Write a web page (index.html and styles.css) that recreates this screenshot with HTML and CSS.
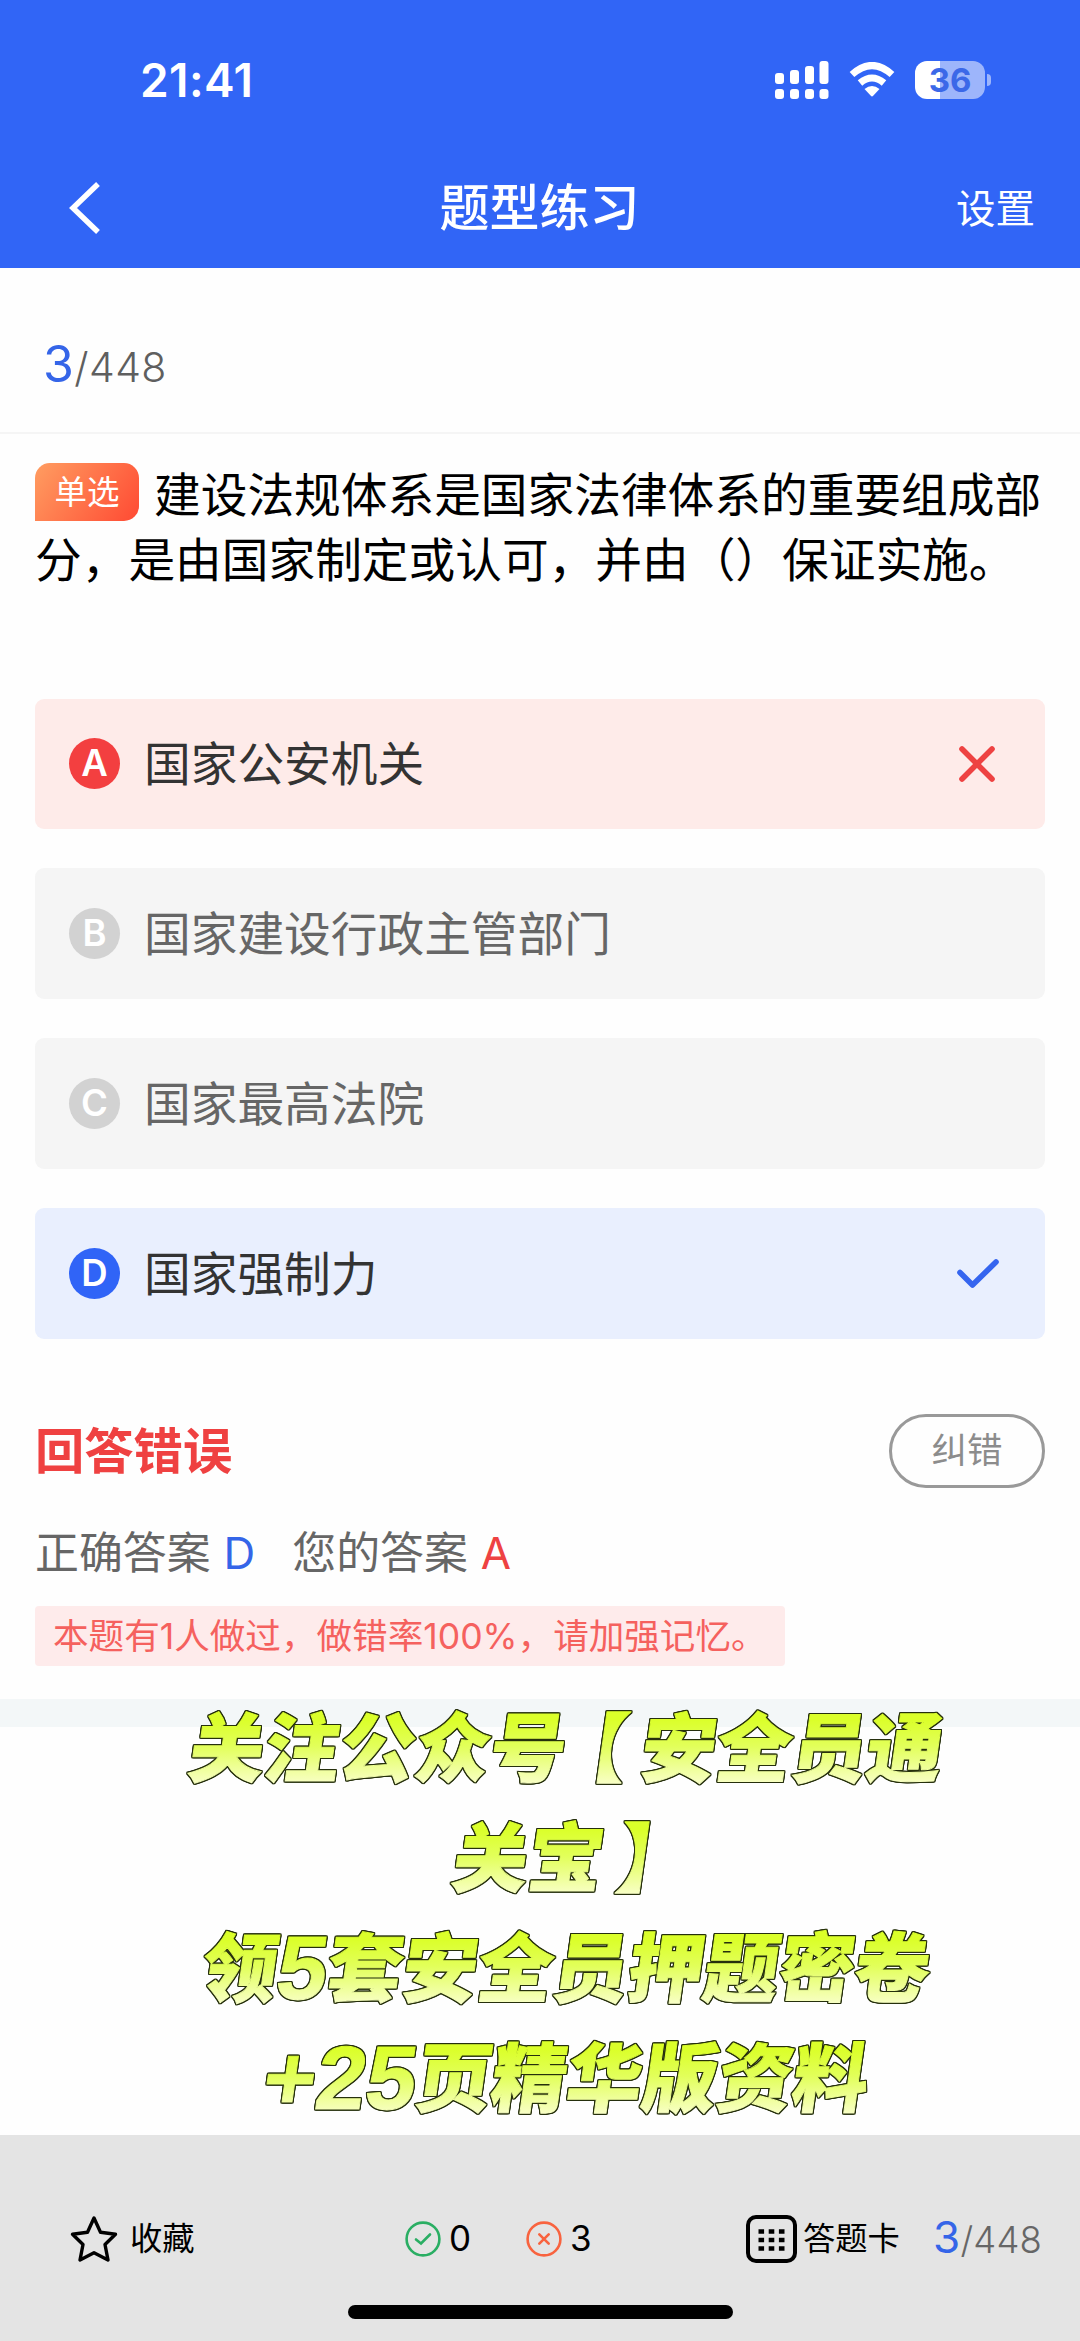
FILE: index.html
```html
<!DOCTYPE html>
<html lang="zh-CN">
<head>
<meta charset="utf-8">
<title>题型练习</title>
<link rel="stylesheet" href="styles.css">
</head>
<body>
<div class="screen">
  <header class="header">
    <div class="status">
      <span class="time">21:41</span>
      <div class="status-icons">
        <svg class="signal" width="54" height="38" viewBox="0 0 54 38" fill="#fff">
          <rect x="0" y="12" width="9" height="11" rx="3"/><rect x="15" y="9" width="9" height="14" rx="3"/><rect x="30" y="5" width="9" height="18" rx="3"/><rect x="44.500" y="0" width="9" height="23" rx="3"/>
          <rect x="0" y="28" width="9" height="10" rx="3"/><rect x="15" y="28" width="9" height="10" rx="3"/><rect x="30" y="28" width="9" height="10" rx="3"/><rect x="44.500" y="28" width="9" height="10" rx="3"/>
        </svg>
        <svg class="wifi" width="46" height="36" viewBox="0 0 46 36">
          <path d="M3 12.500Q23-5.500 43 12.500M11 21Q23 11 35 21" fill="none" stroke="#fff" stroke-width="7"/>
          <path d="M15.500 27Q23 21 30.500 27L24.200 33.800Q23 35 21.800 33.800Z" fill="#fff"/>
        </svg>
        <div class="battery"><span>36</span></div>
        <i class="battery-tip"></i>
      </div>
    </div>
    <nav class="nav">
      <svg class="back" width="34" height="54" viewBox="0 0 34 54"><path d="M30 3L5 27L30 51" fill="none" stroke="#fff" stroke-width="5.500"/></svg>
      <h1 class="title">题型练习</h1>
      <span class="settings">设置</span>
    </nav>
  </header>

  <div class="progress"><b>3</b><span>/448</span></div>

  <main class="content">
    <p class="question"><span class="tag">单选</span>建设法规体系是国家法律体系的重要组成部分，是由国家制定或认可，并由（）保证实施。</p>

    <div class="options">
      <div class="option wrong">
        <span class="letter">A</span><span class="label">国家公安机关</span>
        <svg class="mark cross" width="36" height="36" viewBox="0 0 36 36"><path d="M3 3L33 33M33 3L3 33" fill="none" stroke="#ee4242" stroke-width="5.600" stroke-linecap="round"/></svg>
      </div>
      <div class="option"><span class="letter">B</span><span class="label">国家建设行政主管部门</span></div>
      <div class="option"><span class="letter">C</span><span class="label">国家最高法院</span></div>
      <div class="option right">
        <span class="letter">D</span><span class="label">国家强制力</span>
        <svg class="mark check" width="42" height="30" viewBox="0 0 42 30"><path d="M3 13.500L15.500 26L39 3" fill="none" stroke="#3565ef" stroke-width="5.600" stroke-linecap="round" stroke-linejoin="round"/></svg>
      </div>
    </div>

    <section class="result">
      <div class="result-head"><h2>回答错误</h2><span class="report">纠错</span></div>
      <div class="answers"><span>正确答案</span><b class="blue">D</b><span class="yours">您的答案</span><b class="red">A</b></div>
      <div class="hint">本题有1人做过，做错率100%，请加强记忆。</div>
    </section>
  </main>

  <div class="explain">
    <div class="promo">
      <div>关注公众号<span class="open">【</span>安全员通</div>
      <div>关宝<span class="close">】</span></div>
      <div>领<span class="digit">5</span>套安全员押题密卷</div>
      <div><span class="digit">+25</span>页精华版资料</div>
    </div>
  </div>

  <footer class="footer">
    <div class="toolbar">
      <svg class="star" width="48" height="48" viewBox="0 0 48 48"><path d="M24 3L30.500 17.300L45.500 19.200L35 29.500L38 45L24 37.800L10 45L13 29.500L2.500 19.200L17.500 17.300Z" fill="none" stroke="#000" stroke-width="3.400" stroke-linejoin="round"/></svg>
      <span class="fav">收藏</span>
      <svg class="ok" width="36" height="36" viewBox="0 0 36 36" fill="none" stroke="#2aae63" stroke-width="2.600"><circle cx="18" cy="18" r="16.400"/><path d="M11 18.500L16 22.500L25 13.500" stroke-linecap="round"/></svg>
      <span class="num">0</span>
      <svg class="bad" width="36" height="36" viewBox="0 0 36 36" fill="none" stroke="#f8633f" stroke-width="2.600"><circle cx="18" cy="18" r="16.400"/><path d="M13.300 13.300L22.700 22.700M22.700 13.300L13.300 22.700" stroke-linecap="round"/></svg>
      <span class="num">3</span>
      <svg class="grid" width="51" height="48" viewBox="0 0 51 48"><rect x="2" y="2" width="47" height="44" rx="8" fill="none" stroke="#000" stroke-width="4"/><path d="M12.500 16.500H38.500M12.500 25H38.500M12.500 33.500H38.500" stroke="#000" stroke-width="4.600" stroke-dasharray="5.600 4.600"/></svg>
      <span class="card">答题卡</span>
      <div class="count"><b>3</b><span>/448</span></div>
    </div>
    <div class="home"></div>
  </footer>
</div>
</body>
</html>
```
FILE: styles.css
```css
* { box-sizing: border-box; }
body {
  margin: 0;
  background: #fefefe;
  font-family: Inter, "Noto Sans CJK SC", sans-serif;
  color: #000;
}
svg { display: block; flex: none; }
b { font-weight: 400; }
.screen { width: 1080px; height: 2341px; display: flex; flex-direction: column; overflow: hidden; }

.header { height: 268px; flex: none; background: #3165f6; color: #fff; }
.status { height: 160px; padding: 0 89px 0 140px; display: flex; align-items: center; justify-content: space-between; }
.time { font-size: 46px; font-weight: 600; line-height: 60px; letter-spacing: 0.4px; }
.status-icons { display: flex; align-items: center; }
.wifi { margin: 0 20px 0 20px; }
.battery {
  width: 70px; height: 38px; border-radius: 12px;
  background: linear-gradient(90deg, #fff 36%, #9db5fb 36%);
  color: #3b68e8; font-size: 33px; font-weight: 700; line-height: 39px; text-align: center;
}
.battery-tip { width: 4px; height: 12px; margin-left: 2px; background: #9db5fb; border-radius: 0 6px 6px 0; }
.nav { height: 96px; padding: 0 45px 0 68px; display: grid; grid-template-columns: 100px 1fr 100px; align-items: center; }
.title { margin: 0; padding-right: 24px; font-size: 50px; font-weight: 500; line-height: 70px; text-align: center; }
.settings { font-size: 39.5px; line-height: 60px; text-align: right; padding-top: 2px; }

.progress { height: 166px; flex: none; padding: 66px 43px 0; border-bottom: 2px solid #f5f5f5; line-height: 60px; font-size: 41px; font-weight: 300; letter-spacing: 0.4px; color: #5f5f5f; }
.progress b { font-size: 50px; color: #3565e8; }

.content { height: 1265px; flex: none; padding: 29px 35px 0; }
.question { margin: 0 -10px 0 0; height: 235.5px; font-size: 46.7px; line-height: 64.5px; }
.tag {
  display: inline-block; width: 104px; height: 58px; margin-right: 15px;
  border-radius: 15px 15px 15px 0; background: linear-gradient(125deg, #ff9d61, #ff4a33);
  color: #fff; font-size: 32.5px; line-height: 60px; text-align: center; vertical-align: top;
}
.options { display: flex; flex-direction: column; gap: 39.6px; }
.option { height: 130.4px; padding: 0 34px; display: flex; align-items: center; border-radius: 9px; background: #f5f5f5; color: #666; }
.letter { width: 51px; height: 51px; margin-right: 24px; border-radius: 50%; background: #d2d2d2; color: #fff; font-size: 36.5px; font-weight: 600; line-height: 51px; text-align: center; }
.label { font-size: 46.7px; line-height: 66px; flex: 1; padding-top: 1px; }
.wrong { background: #feebe9; color: #333; }
.wrong .letter { background: #f33f40; }
.right { background: #e9effe; color: #333; }
.right .letter { background: #3064f7; }
.cross { margin-right: 16px; }
.check { margin-right: 12px; }

.result { padding-top: 75.5px; }
.result-head { height: 74px; display: flex; align-items: center; justify-content: space-between; }
.result h2 { margin: 0; font-size: 49.3px; font-weight: 700; line-height: 70px; color: #ef4141; }
.report { width: 156px; height: 74px; border: 3px solid #999; border-radius: 37px; color: #8c8c8c; font-size: 35.5px; line-height: 67px; text-align: center; }
.answers { margin-top: 34px; height: 62px; display: flex; font-size: 43.9px; line-height: 62px; color: #666; }
.answers b { margin-left: 13px; }
.answers .yours { margin-left: 37px; }
.blue { color: #3565e8; }
.red { color: #ee4242; }
.hint { display: inline-block; margin-top: 22px; width: 750px; height: 60px; padding-left: 18px; border-radius: 4px; background: #feebeb; color: #f5615e; font-size: 35.6px; line-height: 61px; white-space: nowrap; }

.explain { height: 436px; flex: none; border-top: 28px solid #f3f7f8; }
/* promotional caption floats over the separator band */
.promo {
  position: relative; top: -38px; padding-left: 54px;
  font: 900 75.3px/110px "Noto Sans CJK SC", sans-serif; text-align: center;
  filter: drop-shadow(1px 0 0 #26300c) drop-shadow(-1px 0 0 #26300c) drop-shadow(0 1px 0 #26300c) drop-shadow(0 -1px 0 #26300c);
}
.promo div {
  width: 100%; height: 110px; transform: skewX(-8deg); white-space: nowrap;
  background: linear-gradient(#dbff2a 28%, #e2ff5a 52%, #f8ffc5 86%);
  -webkit-background-clip: text; background-clip: text; color: transparent;
  -webkit-text-stroke: 1px transparent;
}
.open { margin: 0 14px 0 -14px; }
.close { margin: 0 -14px 0 14px; }
.digit { font: 700 90px/0 "Liberation Sans", sans-serif; vertical-align: -3px; }

.footer { height: 206px; flex: none; background: #e4e4e4; }
.toolbar { height: 170px; padding: 37px 0 0 70px; display: flex; align-items: center; font-size: 32.3px; line-height: 50px; }
.fav { margin-left: 12px; width: 275px; }
.num { font-size: 35px; width: 76px; padding-left: 8px; margin-top: -2px; }
.bad { margin-left: 9px; }
.num + .grid { margin-left: 108px; }
.card { margin-left: 6px; width: 98px; }
.count { margin-left: 32px; font-size: 36.5px; font-weight: 300; letter-spacing: 0.2px; color: #666; white-space: nowrap; }
.count b { font-size: 44px; color: #3565e8; }
.home { width: 385px; height: 14px; margin: 0 auto; border-radius: 7px; background: #000; }
```
